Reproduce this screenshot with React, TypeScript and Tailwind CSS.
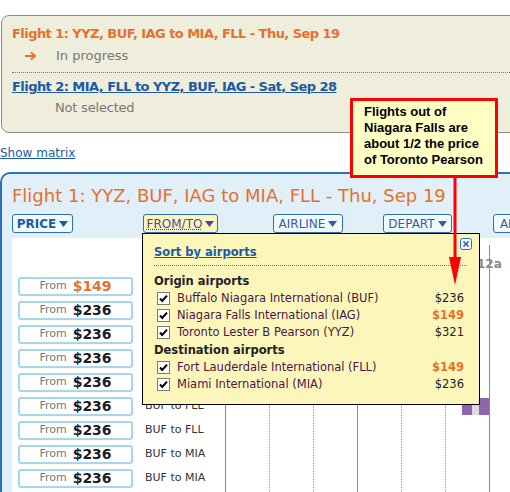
import React from "react";

const orange = "text-[#e4712e]";

function Caret({ className = "" }: { className?: string }) {
    return (
        <svg width="9" height="6" viewBox="0 0 9 6" className={className}>
            <path d="M0 0h9L4.5 6z" fill="currentColor" />
        </svg>
    );
}

function Check() {
    return (
        <svg width="13" height="13" viewBox="0 0 13 13" className="shrink-0">
            <rect x="0.5" y="0.5" width="12" height="12" fill="#fff" stroke="#7a7a7a" />
            <path d="M3 6.5l2.2 2.4L10 3.6" fill="none" stroke="#000" strokeWidth="2" />
        </svg>
    );
}

const priceRows = [
    { price: "$149", hot: true, route: "IAG to FLL" },
    { price: "$236", route: "BUF to FLL" },
    { price: "$236", route: "BUF to FLL" },
    { price: "$236", route: "BUF to MIA" },
    { price: "$236", route: "BUF to MIA" },
    { price: "$236", route: "BUF to FLL" },
    { price: "$236", route: "BUF to FLL" },
    { price: "$236", route: "BUF to MIA" },
    { price: "$236", route: "BUF to MIA" },
];

const origins = [
    { name: "Buffalo Niagara International (BUF)", price: "$236" },
    { name: "Niagara Falls International (IAG)", price: "$149", hot: true },
    { name: "Toronto Lester B Pearson (YYZ)", price: "$321" },
];

const destinations = [
    { name: "Fort Lauderdale International (FLL)", price: "$149", hot: true },
    { name: "Miami International (MIA)", price: "$236" },
];

function AirportRow({ name, price, hot }: { name: string; price: string; hot?: boolean }) {
    return (
        <div className="flex h-[17px] items-center pl-[14px] pr-[15px]">
            <Check />
            <span className="ml-[7px] text-[#4a1646]">{name}</span>
            <span className={`ml-auto ${hot ? `font-bold ${orange}` : "text-[#222]"}`}>{price}</span>
        </div>
    );
}

function FilterButton({ label, className = "" }: { label: string; className?: string }) {
    return (
        <div
            className={`flex h-[19px] shrink-0 items-center justify-center gap-[3px] rounded-[3px] border border-[#2d6fb5] text-[12px] ${className}`}
        >
            <span>{label}</span>
            <Caret />
        </div>
    );
}

export default function App() {
    return (
        <div className="relative h-[492px] w-[510px] overflow-hidden bg-white font-['DejaVu_Sans',Verdana,sans-serif]">
            {/* itinerary summary */}
            <div className="ml-px mt-[15px] h-[118px] w-[540px] rounded-l-[8px] border border-[#8c8c8c] bg-[#efeedc] pl-[10px] pt-[9px]">
                <div className={`h-[18px] text-[13px] font-bold leading-[18px] tracking-[-0.55px] ${orange}`}>
                    Flight 1: YYZ, BUF, IAG to MIA, FLL - Thu, Sep 19
                </div>
                <div className="mt-[4px] flex h-[18px] items-center text-[13px] text-[#777]">
                    <svg width="12" height="10" viewBox="0 0 12 10" className="ml-[13px] mr-[19px] text-[#e4712e]">
                        <path d="M0 5h9M6 1.5L10 5 6 8.5" fill="none" stroke="currentColor" strokeWidth="2" />
                    </svg>
                    In progress
                </div>
                <div className="mt-[7px] border-t border-dotted border-[#777]" />
                <div className="mt-[5px] h-[18px] text-[13px] font-bold leading-[18px] tracking-[-0.55px] text-[#1d5aa5] underline">
                    Flight 2: MIA, FLL to YYZ, BUF, IAG - Sat, Sep 28
                </div>
                <div className="mt-[3px] h-[18px] pl-[43px] text-[13px] leading-[18px] tracking-[-0.2px] text-[#777]">Not selected</div>
            </div>

            <div className="mt-[11px] h-[18px] text-[12px] leading-[18px] text-[#1d5aa5] underline">Show matrix</div>

            {/* results panel */}
            <div className="mt-[10px] h-[340px] w-[540px] rounded-tl-[10px] border-2 border-r-0 border-b-0 border-[#2d72b8] bg-[#e1f0f8] pl-[10px]">
                <div className={`mt-[10px] h-[24px] text-[18px] leading-[24px] ${orange}`}>
                    Flight 1: YYZ, BUF, IAG to MIA, FLL - Thu, Sep 19
                </div>
                <div className="mt-[6px] flex">
                    <FilterButton label="PRICE" className="w-[61px] bg-[#f2f9fd] font-bold text-[#1d5aa5]" />
                    <FilterButton
                        label="FROM/TO"
                        className="ml-[70px] w-[75px] bg-[#fdf5b9] text-[#4a4aa0] [&>span]:underline [&>span]:decoration-dotted"
                    />
                    <FilterButton label="AIRLINE" className="ml-[55px] w-[70px] bg-[#f2f9fd] text-[#2d5faa]" />
                    <FilterButton label="DEPART" className="ml-[40px] w-[69px] bg-[#f2f9fd] text-[#2d5faa]" />
                    <FilterButton label="ARRIVE" className="ml-[41px] w-[70px] bg-[#f2f9fd] text-[#2d5faa]" />
                </div>

                <div className="mt-[5px] flex h-[260px] bg-white">
                    <div className="w-[213px] shrink-0 pl-[6px] pt-[39px]">
                        {priceRows.map((r, i) => (
                            <div key={i} className="mb-[5px] flex h-[19px] items-center">
                                <div className="flex h-[19px] w-[115px] items-center justify-center gap-[6px] rounded-[3px] border-2 border-[#a3d8ea] bg-white">
                                    <span className="text-[11px] text-[#777]">From</span>
                                    <span className={`text-[14px] font-bold ${r.hot ? orange : "text-[#1a1a2a]"}`}>{r.price}</span>
                                </div>
                                <span className="ml-[12px] text-[11px] text-[#333]">{r.route}</span>
                            </div>
                        ))}
                    </div>

                    <div className="relative flex-1">
                        {[0, 132, 264].map((x) => (
                            <div key={x} className="absolute top-[7px] bottom-0 border-l border-[#8a8a8a]" style={{ left: x }} />
                        ))}
                        {[44, 88, 176, 220].map((x) => (
                            <div key={x} className="absolute top-[7px] bottom-0 border-l border-dotted border-[#999]" style={{ left: x }} />
                        ))}
                        <span className="absolute left-[252px] top-[20px] text-[12px] font-bold leading-[12px] text-[#8a8a8a]">12a</span>
                        <div className="absolute left-[237px] top-[160px] flex h-[17px]">
                            <div className="w-[10px] bg-[#8e65ad]" />
                            <div className="w-[7px] bg-[#dcdcdc]" />
                            <div className="w-[10px] bg-[#8e65ad]" />
                        </div>
                    </div>
                </div>
            </div>

            {/* FROM/TO dropdown */}
            <div className="absolute left-[142px] top-[233px] z-10 h-[172px] w-[338px] border border-black bg-[#fdf6bb] text-[11.5px]">
                <svg width="12" height="12" viewBox="0 0 12 12" className="absolute right-[7px] top-[4px]">
                    <rect x="0.5" y="0.5" width="11" height="11" rx="2" fill="#eef5fb" stroke="#2d6fb5" />
                    <path d="M3.5 3.5l5 5M8.5 3.5l-5 5" stroke="#2d5faa" strokeWidth="1.6" />
                </svg>
                <div className="ml-[11px] mt-[10px] text-[11.5px] font-bold text-[#1d5aa5] underline">Sort by airports</div>
                <div className="ml-[11px] mr-[12px] mt-[4px] border-t border-dotted border-[#777]" />
                <div className="ml-[11px] mt-[6px] h-[18px] text-[11.5px] font-bold leading-[18px] text-[#222]">Origin airports</div>
                {origins.map((a) => (
                    <AirportRow key={a.name} {...a} />
                ))}
                <div className="ml-[11px] h-[18px] text-[11.5px] font-bold leading-[18px] text-[#222]">Destination airports</div>
                {destinations.map((a) => (
                    <AirportRow key={a.name} {...a} />
                ))}
            </div>

            {/* annotation */}
            <div className="absolute left-[350px] top-[98px] z-20 h-[80px] w-[148px] border-[3px] border-[#ff0000] bg-[#ffffc4] pl-[11px] pt-[3px] font-['Liberation_Sans',Arial,sans-serif] text-[13px] font-bold leading-[16px] text-black">
                Flights out of
                <br />
                Niagara Falls are
                <br />
                about 1/2 the price
                <br />
                of Toronto Pearson
            </div>
            <svg width="14" height="110" viewBox="0 0 14 110" className="absolute left-[448px] top-[177px] z-20">
                <path d="M7 0v84" stroke="#ff0000" strokeWidth="3" />
                <path d="M1 80h12L7 108z" fill="#ff0000" />
            </svg>
        </div>
    );
}
